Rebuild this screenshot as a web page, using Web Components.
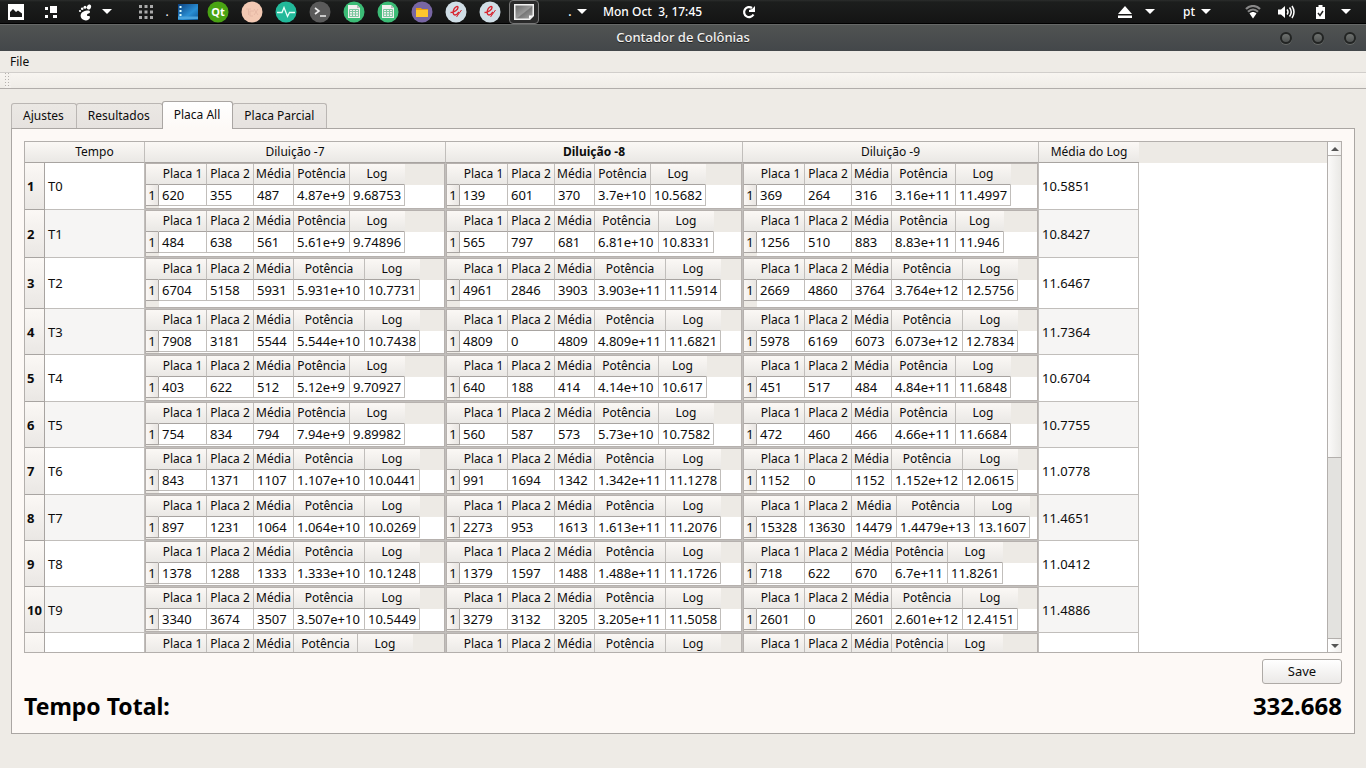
<!DOCTYPE html>
<html lang="pt">
<head>
<meta charset="utf-8">
<title>Contador de Colônias</title>
<style>
html, body { margin: 0; height: 100%; }
body { font: 13px/18px "Noto Sans", sans-serif; color: #0c0c0c; background: #eeebe6; }
</style>
</head>
<body>
<colony-app></colony-app>

<template id="t-app">
<style>
:host { display: flex; flex-direction: column; height: 100vh; overflow: hidden; }
main { flex: 1; min-height: 0; display: flex; flex-direction: column; padding: 12px 11px 34px; }
.label { display: flex; justify-content: space-between; margin-top: 6px; font-size: 23px; line-height: 32px; font-weight: 700; color: #000; }
.actions { display: flex; justify-content: flex-end; margin-top: 6px; }
.save { font: inherit; color: inherit; width: 80px; height: 25px; padding: 0 0 2px; border: 1px solid #aeaaa6; border-radius: 3px; background: linear-gradient(#fff, #ebe9e7); }
output { font-size: 24px; }
</style>
<desktop-bar></desktop-bar>
<window-title>Contador de Colônias</window-title>
<app-menu></app-menu>
<main>
<tab-panel>
<log-table></log-table>
<div class="actions"><button class="save" type="button">Save</button></div>
<div class="label"><span>Tempo Total:</span><output>332.668</output></div>
</tab-panel>
</main>
</template>

<template id="t-desktop">
<style>
:host { display: flex; justify-content: space-between; height: 24px; box-sizing: border-box; padding: 0 15px 0 6px; background: linear-gradient(#2b2d2c, #1c1e1d 2px, #141414); border-bottom: 1px solid #000; color: #fff; font-size: 12px; }
div, nav { display: flex; align-items: center; height: 24px; }
button { font: inherit; font-weight: 500; color: inherit; background: none; border: 0; padding: 0; margin: 0; display: flex; align-items: center; justify-content: center; height: 24px; white-space: pre; }
svg { display: block; flex: none; }
.w20 { width: 20px; }
.w52 { width: 52px; }
.foot { width: 36px; gap: 9px; margin-left: -1px; }
.w34 { width: 34px; }
.desk { margin-right: -4px; }
.active { width: 30px; margin-left: 2px; box-sizing: border-box; border: 1px solid #777; border-radius: 4px; background: #2a2a2a; }
.clock { margin-left: 16px; }
.reload { margin-left: 39px; }
.apps { margin-left: 16px; }
.dot { width: 8px; text-align: center; }
.menu { margin-left: 27px; gap: 3px; }
.right { gap: 12px; }
.right button { gap: 6px; }
.right .eject { gap: 13px; }
.wifi { margin-left: 22px; }
.sound { margin-left: 5px; }
.pt { margin-left: 16px; }
.right .bat { margin-left: 9px; gap: 16px; }
</style>
<div>
<button class="w20" aria-label="Imagens"><svg width="18" height="17" viewBox="0 0 18 17"><path d="M1 0h16v16H1z" fill="#fff"/><path d="M3 13V8l3-3 3 3 2-1.500 4 3V13z" fill="#191919"/></svg></button>
<button class="w52" aria-label="Áreas"><svg width="16" height="14" viewBox="0 0 16 14"><path d="M6 1h7v7H6zM1 2h3v3H1zM1 10h3v3H1zM9 10h4v3H9z" fill="#fff"/></svg></button>
<button class="foot" aria-label="Menu"><svg width="15" height="17" viewBox="0 0 15 17"><ellipse cx="11" cy="3" rx="2" ry="2.600" transform="rotate(20 11 3)" fill="#fff"/><circle cx="7" cy="3.200" r="1.500" fill="#fff"/><circle cx="4.200" cy="4.800" r="1.300" fill="#fff"/><circle cx="2" cy="7" r="1.100" fill="#fff"/><path d="M3 10c1-3 9-5 9-2 0 2-3 1-3 3s3 0 3 2c0 3-4 4-6 3-3-1-4-4-3-6z" fill="#fff"/></svg><svg width="10" height="6"><path d="M0 0h10L5 5z" fill="#fff"/></svg></button>
<nav class="apps" aria-label="Aplicativos">
<button class="w34" aria-label="Grade"><svg width="16" height="16" fill="#aaa"><path d="M1 1h3v3H1zM6.500 1h3v3h-3zM12 1h3v3h-3zM1 6.500h3v3H1zM6.500 6.500h3v3h-3zM12 6.500h3v3h-3zM1 12h3v3H1zM6.500 12h3v3h-3zM12 12h3v3h-3z"/></svg></button>
<span class="dot">.</span>
<button class="w34 desk" aria-label="Área de trabalho"><svg width="20" height="16"><defs><linearGradient id="d" x2="1" y2="1"><stop stop-color="#0b3f7d"/><stop offset=".6" stop-color="#2a8fd4"/><stop offset="1" stop-color="#0b5699"/></linearGradient></defs><path d="M0 0h20v16H0z" fill="url(#d)"/><path d="M0 12.500h20V15H0z" fill="#4aa3dc"/><path d="M1.500 2h2v2h-2zM1.500 6h2v2h-2zM1.500 10h2v2h-2z" fill="#dff"/></svg></button>
<button class="w34" aria-label="Qt"><svg width="22" height="22"><circle cx="11" cy="11" r="10.500" fill="#49a313"/><text x="11" y="15" text-anchor="middle" font-family="Noto Sans" font-weight="700" font-size="11" fill="#fff">Qt</text></svg></button>
<button class="w34" aria-label="TeX"><svg width="22" height="22"><circle cx="11" cy="11" r="10.500" fill="#f3c9b3"/><path d="M5 8h5M7.500 8v6M9 10h4M9 10v5h3M13 8l4 6M17 8l-4 6" stroke="#e6b9a6" fill="none"/></svg></button>
<button class="w34" aria-label="Monitor"><svg width="22" height="22"><circle cx="11" cy="11" r="10.500" fill="#22b99a"/><path d="M2 11.500h5l2-5 3.500 9 2-4H20" stroke="#e9fff9" stroke-width="1.300" fill="none"/></svg></button>
<button class="w34" aria-label="Terminal"><svg width="22" height="22"><circle cx="11" cy="11" r="10.500" fill="#5a5a5a"/><path d="M6 7l4 3-4 3M11 15h6" stroke="#eee" stroke-width="1.600" fill="none"/></svg></button>
<button class="w34" aria-label="Planilha"><svg width="22" height="22"><circle cx="11" cy="11" r="10.500" fill="#3cbc76"/><path d="M5 4h9l3 3v10H5z" fill="#f0f0ee"/><path d="M14 4v3h3z" fill="#bbb"/><path d="M6.500 8.500h9v7h-9zM6.500 10.500h9M6.500 13h9M9.500 8.500v7M12.500 8.500v7" fill="none" stroke="#7cc79f"/></svg></button>
<button class="w34" aria-label="Planilha 2"><svg width="22" height="22"><circle cx="11" cy="11" r="10.500" fill="#3cbc76"/><path d="M5 4h9l3 3v10H5z" fill="#f0f0ee"/><path d="M14 4v3h3z" fill="#bbb"/><path d="M6.500 8.500h9v7h-9zM6.500 10.500h9M6.500 13h9M9.500 8.500v7M12.500 8.500v7" fill="none" stroke="#7cc79f"/></svg></button>
<button class="w34" aria-label="Arquivos"><svg width="22" height="22"><circle cx="11" cy="11" r="10.500" fill="#7866a3"/><path d="M5 7h5l1 1h6v8H5z" fill="#e9a00f"/><path d="M5 9h12v7H5z" fill="#ffc62e"/></svg></button>
<button class="w34" aria-label="Documento"><svg width="22" height="22"><circle cx="11" cy="11" r="10.500" fill="#d0dee6"/><path d="M5.500 11.500c4 0 7.500-3 7.500-5 0-1.800-2.500-1.200-4 1.500-1.500 3-1 6 1 6 1.500 0 3-1.500 4-3" stroke="#d8242e" stroke-width="1.400" fill="none"/><path d="M11.500 16l5-7" stroke="#d8242e" fill="none"/></svg></button>
<button class="w34" aria-label="Documento 2"><svg width="22" height="22"><circle cx="11" cy="11" r="10.500" fill="#d0dee6"/><path d="M5.500 11.500c4 0 7.500-3 7.500-5 0-1.800-2.500-1.200-4 1.500-1.500 3-1 6 1 6 1.500 0 3-1.500 4-3" stroke="#d8242e" stroke-width="1.400" fill="none"/><path d="M11.500 16l5-7" stroke="#d8242e" fill="none"/></svg></button>
<button class="active" aria-label="Janela atual"><svg width="20" height="16"><defs><linearGradient id="w" x2="1" y2="1"><stop stop-color="#666"/><stop offset=".5" stop-color="#999"/><stop offset=".55" stop-color="#777"/><stop offset="1" stop-color="#aaa"/></linearGradient></defs><path d="M.75.750h18.500v11l-3.500 3.500h-15z" fill="url(#w)" stroke="#f2f2f2" stroke-width="1.500"/><path d="M19 11.500h-4V15z" fill="#fff"/></svg></button>
</nav>
<button class="menu" aria-label="Mais"><span class="dot">.</span><svg width="10" height="6"><path d="M0 0h10L5 5z" fill="#fff"/></svg></button>
<button class="clock">Mon Oct  3, 17:45</button>
<button class="reload" aria-label="Atualizar"><svg width="16" height="14" viewBox="0 0 16 14"><path d="M12.500 9.500A5 5 0 1 1 11 3" stroke="#fff" stroke-width="2.200" fill="none"/><path d="M8 7V5l3-1 3-3v6z" fill="#fff"/></svg></button>
</div>
<div class="right">
<button class="eject" aria-label="Ejetar"><svg width="14" height="12"><path d="M7 0l7 8H0zM0 9.500h14V12H0z" fill="#fff"/></svg><svg width="10" height="6"><path d="M0 0h10L5 5z" fill="#fff"/></svg></button>
<button class="pt">pt<svg width="10" height="6"><path d="M0 0h10L5 5z" fill="#fff"/></svg></button>
<button class="wifi" aria-label="Rede"><svg width="16" height="14" viewBox="0 0 16 14"><path d="M1 4c4-4 10-4 14 0M3 6.800c3-3 7-3 10 0" stroke="#888" stroke-width="2.200" fill="none"/><path d="M4.500 8.500c2-2 5-2 7 0L8 13.500z" fill="#fff"/></svg></button>
<button class="sound" aria-label="Som"><svg width="17" height="14" viewBox="0 0 17 14"><path d="M0 4.500h3L7 1v12L3 9.500H0z" fill="#fff"/><path d="M9 4.500q2 2.500 0 5M11.500 2.500q3.500 4.500 0 9M14 1q4 6 0 12" stroke="#fff" stroke-width="1.500" fill="none"/></svg></button>
<button class="bat" aria-label="Bateria"><svg width="9" height="14"><path d="M2.500 0h4v2H9v12H0V2h2.500z" fill="#fff"/><path d="M2 8l2 2.500L7 6" stroke="#222" stroke-width="1.500" fill="none"/></svg><svg width="10" height="6"><path d="M0 0h10L5 5z" fill="#fff"/></svg></button>
</div>
</template>

<template id="t-title">
<style>
:host { display: grid; grid-template-columns: 96px 1fr 96px; align-items: center; height: 27px; box-sizing: border-box; border-top: 1px solid #666867; background: linear-gradient(#505352, #43474a); color: #f2f2f0; font-weight: 500; }
h1 { grid-column: 2; margin: 0; padding-bottom: 2px; font: inherit; text-align: center; text-shadow: 0 1px #222; }
div { display: flex; }
button { width: 32px; height: 24px; padding: 0; border: 0; background: none; display: flex; align-items: center; justify-content: center; }
i { width: 8px; height: 8px; border: 2px solid #222423; border-radius: 50%; background: linear-gradient(#6f7270, #4f5251); box-shadow: 0 1px #666967; }
</style>
<h1><slot></slot></h1>
<div><button aria-label="Minimizar"><i></i></button><button aria-label="Maximizar"><i></i></button><button aria-label="Fechar"><i></i></button></div>
</template>

<template id="t-menu">
<style>
:host { display: block; }
nav { display: flex; height: 21px; border-bottom: 1px solid #d1cecb; }
button { font: inherit; font-size: 12px; color: inherit; border: 0; background: none; padding: 0 10px; }
.tools { height: 15px; padding-left: 5px; background: linear-gradient(#f8f5f1, #efece7); border-bottom: 1px solid #b1adaa; }
.grip { width: 6px; height: 15px; background: repeating-linear-gradient(transparent 0 1px, #f4f1ed 1px 3px), repeating-linear-gradient(90deg, #b5b1ad 0 1px, transparent 1px 3px); }
</style>
<nav><button type="button">File</button></nav>
<div class="tools"><div class="grip"></div></div>
</template>

<template id="t-tabs">
<style>
:host { flex: 1; min-height: 0; display: flex; flex-direction: column; }
.tabs { display: flex; align-items: flex-end; height: 27px; }
button { font: inherit; font-size: 12px; color: inherit; height: 25px; padding: 0 12px 0 11px; box-sizing: border-box; border: 1px solid #bab6b3; border-bottom: 0; border-radius: 3px 3px 0 0; background: linear-gradient(#ebe8e4, #e6e2df); }
button + button { margin-left: -1px; }
button[aria-selected=true] { height: 28px; margin-bottom: -1px; padding-bottom: 2px; border-color: #aaa6a3; background: linear-gradient(#fff, #fdf9f6); position: relative; }
section { flex: 1; min-height: 0; display: flex; flex-direction: column; padding: 12px 12px 11px; border: 1px solid #aaa6a3; background: #fdf9f6; }
</style>
<div class="tabs" role="tablist">
<button role="tab">Ajustes</button><button role="tab">Resultados</button><button role="tab" aria-selected="true">Placa All</button><button role="tab">Placa Parcial</button>
</div>
<section role="tabpanel"><slot></slot></section>
</template>

<template id="t-log">
<style>
:host { flex: 1; min-height: 0; display: flex; overflow: hidden; border: 1px solid #b3afac; background: #fff; }
.view { flex: 1; min-width: 0; overflow: hidden; background: linear-gradient(#edeae5, #edeae5) 0 0 / 100% 21px no-repeat; }
table { border-spacing: 0; table-layout: fixed; width: 1114px; }
th, td { box-sizing: border-box; padding: 0; border-right: 1px solid #c1bebb; border-bottom: 1px solid #c1bebb; }
thead th { height: 21px; font-size: 12px; font-weight: 400; line-height: 20px; background: linear-gradient(#fbf8f5, #eae8e5); border-bottom-color: #a8a4a1; }
thead th:first-child, thead th:last-child { border-right: 0; }
thead .current { font-weight: 700; }
tbody th { padding-left: 2px; text-align: left; font-weight: 700; background: linear-gradient(#fbf8f5, #eae7e4); border-color: #a8a4a1; }
td.text { padding: 0 3px; background: #fff; }
tr:nth-child(even) td.text { background: #f6f5f4; }
.n20 { width: 20px; } .n100 { width: 100px; } .d7 { width: 301px; } .d8 { width: 297px; } .d9 { width: 296px; }
tbody tr { height: var(--h); }
</style>
<div class="view">
<table>
<colgroup><col class="n20"><col class="n100"><col class="d7"><col class="d8"><col class="d9"><col class="n100"></colgroup>
<thead><tr><th></th><th>Tempo</th><th>Diluição -7</th><th class="current">Diluição -8</th><th>Diluição -9</th><th>Média do Log</th></tr></thead>
<tbody></tbody>
</table>
</div>
<scroll-rail></scroll-rail>
</template>

<template id="t-plate">
<style>
:host { display: block; box-sizing: border-box; height: calc(var(--h) - 1px); overflow: hidden; border: 1px solid #b6b1ae; background: linear-gradient(#edeae5, #edeae5) 0 0 / 100% 21px no-repeat, linear-gradient(#edeae5, #edeae5) 0 0 / 13px 100% no-repeat, #fff; }
table { border-spacing: 0; table-layout: fixed; width: 0; }
th, td { box-sizing: border-box; height: 21px; line-height: 20px; padding: 0; font-weight: 400; white-space: nowrap; border-right: 1px solid #c1bebb; border-bottom: 1px solid #c1bebb; }
td { padding-left: 3px; background: #fff; }
thead th { font-size: 12px; background: linear-gradient(#fbf8f5, #eae8e5); border-bottom-color: #a8a4a1; }
thead th:first-child, thead th:last-child { border-right-color: transparent; }
tbody th { background: linear-gradient(90deg, #fbf8f5, #e9e6e3); border-color: #a8a4a1; }
</style>
<table><colgroup></colgroup>
<thead><tr><th></th><th>Placa 1</th><th>Placa 2</th><th>Média</th><th>Potência</th><th>Log</th></tr></thead>
<tbody></tbody></table>
</template>

<template id="t-rail">
<style>
:host { display: flex; flex-direction: column; width: 13px; border-left: 1px solid #b3afac; background: #e3e2df; }
button { height: 13px; padding: 0; border: 0; background: linear-gradient(90deg, #fff, #f1efed); display: flex; align-items: center; justify-content: center; }
.thumb { flex: 301 0 0; border: solid #b3afac; border-width: 1px 0; background: linear-gradient(90deg, #fbfaf9, #e9e8e5); }
.rest { flex: 180 0 0; border-bottom: 1px solid #b3afac; }
</style>
<button aria-label="Subir"><svg width="8" height="4"><path d="M0 4h8L4 0z" fill="#555"/></svg></button>
<div class="thumb"></div><div class="rest"></div>
<button aria-label="Descer"><svg width="8" height="4"><path d="M0 0h8L4 4z" fill="#555"/></svg></button>
</template>

<script>
const define = (name, id, setup) => customElements.define(name, class extends HTMLElement {
  constructor() {
    super();
    this.attachShadow({ mode: "open" }).append(document.getElementById(id).content.cloneNode(true));
  }
  connectedCallback() {
    if (setup && !this.ready) { this.ready = true; setup(this, this.shadowRoot); }
  }
});

// Row height, three dilutions (plate 1, plate 2, mean, power, log) and mean log.
const rows = [
  [47, "620 355 487 4.87e+9 9.68753", "139 601 370 3.7e+10 10.5682", "369 264 316 3.16e+11 11.4997", "10.5851"],
  [48, "484 638 561 5.61e+9 9.74896", "565 797 681 6.81e+10 10.8331", "1256 510 883 8.83e+11 11.946", "10.8427"],
  [51, "6704 5158 5931 5.931e+10 10.7731", "4961 2846 3903 3.903e+11 11.5914", "2669 4860 3764 3.764e+12 12.5756", "11.6467"],
  [46, "7908 3181 5544 5.544e+10 10.7438", "4809 0 4809 4.809e+11 11.6821", "5978 6169 6073 6.073e+12 12.7834", "11.7364"],
  [47, "403 622 512 5.12e+9 9.70927", "640 188 414 4.14e+10 10.617", "451 517 484 4.84e+11 11.6848", "10.6704"],
  [46, "754 834 794 7.94e+9 9.89982", "560 587 573 5.73e+10 10.7582", "472 460 466 4.66e+11 11.6684", "10.7755"],
  [47, "843 1371 1107 1.107e+10 10.0441", "991 1694 1342 1.342e+11 11.1278", "1152 0 1152 1.152e+12 12.0615", "11.0778"],
  [46, "897 1231 1064 1.064e+10 10.0269", "2273 953 1613 1.613e+11 11.2076", "15328 13630 14479 1.4479e+13 13.1607", "11.4651"],
  [46, "1378 1288 1333 1.333e+10 10.1248", "1379 1597 1488 1.488e+11 11.1726", "718 622 670 6.7e+11 11.8261", "11.0412"],
  [46, "3340 3674 3507 3.507e+10 10.5449", "3279 3132 3205 3.205e+11 11.5058", "2601 0 2601 2.601e+12 12.4151", "11.4886"]
];

define("plate-table", "t-plate", (el, root) => {
  const values = el.getAttribute("values")?.split(" ");
  const widths = values
    ? [13, 48, 47, values[2].length > 4 ? 45 : 40,
       { 7: 56, 8: 64, 9: 71, 10: 78 }[values[3].length], values[4].length < 7 ? 48 : 55]
    : [13, 48, 47, 40, Number(el.getAttribute("power-width")), 55];
  root.querySelector("colgroup").innerHTML = widths.map(w => `<col style="width:${w}px">`).join("");
  root.querySelector("table").style.width = widths.reduce((a, b) => a + b) + "px";
  if (values) root.querySelector("tbody").innerHTML = `<tr><th>1</th>${values.map(v => `<td>${v}</td>`).join("")}</tr>`;
});
define("scroll-rail", "t-rail");
define("log-table", "t-log", (el, root) => {
  const plate = v => `<td><plate-table values="${v}"></plate-table></td>`;
  const body = rows.map(([h, a, b, c, mean], i) =>
    `<tr style="--h:${h}px"><th>${i + 1}</th><td class="text">T${i}</td>${plate(a)}${plate(b)}${plate(c)}<td class="text">${mean}</td></tr>`);
  const pending = [64, 71, 56].map(w => `<td><plate-table power-width="${w}"></plate-table></td>`).join("");
  body.push(`<tr style="--h:46px"><th></th><td class="text"></td>${pending}<td class="text"></td></tr>`);
  root.querySelector("tbody").innerHTML = body.join("");
});
define("desktop-bar", "t-desktop");
define("window-title", "t-title");
define("app-menu", "t-menu");
define("tab-panel", "t-tabs");
define("colony-app", "t-app");
</script>
</body>
</html>
